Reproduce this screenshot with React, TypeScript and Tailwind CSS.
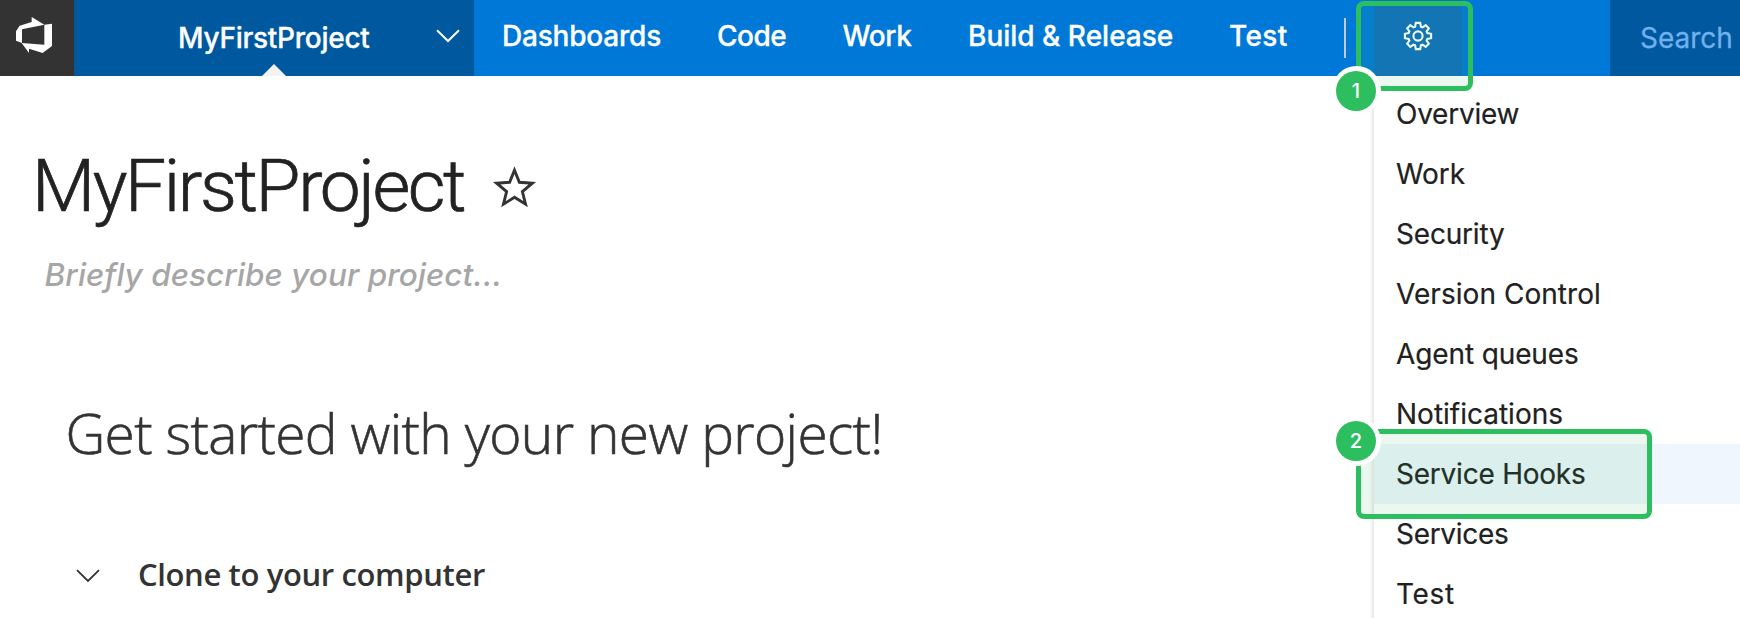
const gearPath = (() => {
  const pts: string[] = [];
  for (let i = 0; i < 8; i++) {
    const a = (i * Math.PI) / 4;
    const at = (x: number, y: number) =>
      `${(x * Math.cos(a) - y * Math.sin(a)).toFixed(2)} ${(x * Math.sin(a) + y * Math.cos(a)).toFixed(2)}`;
    pts.push(`${i === 0 ? "M" : "L"}${at(-2.9, -9.3)}`, `L${at(-2.2, -13.1)}`, `L${at(2.2, -13.1)}`, `L${at(2.9, -9.3)}`);
  }
  return pts.join(" ") + "Z";
})();

const starPoints = Array.from({ length: 10 }, (_, i) => {
  const r = i % 2 === 0 ? 18.8 : 8.3;
  const a = -Math.PI / 2 + (i * Math.PI) / 5;
  return `${(r * Math.cos(a)).toFixed(2)},${(r * Math.sin(a)).toFixed(2)}`;
}).join(" ");

const navItems = [
  { label: "Dashboards", cls: "w-[215px] tracking-[-0.2px]" },
  { label: "Code", cls: "w-[125.5px] tracking-[-0.5px]" },
  { label: "Work", cls: "w-[125.5px] tracking-[-0.4px]" },
  { label: "Build & Release", cls: "w-[261px]" },
  { label: "Test", cls: "w-[114.5px] tracking-[0.4px]" },
];

const menuItems = [
  { label: "Overview", cls: "tracking-[-0.25px]" },
  { label: "Work", cls: "tracking-[-0.1px]" },
  { label: "Security", cls: "tracking-[-0.19px]" },
  { label: "Version Control", cls: "tracking-[0.05px]" },
  { label: "Agent queues", cls: "tracking-[-0.12px]" },
  { label: "Notifications", cls: "tracking-[0px]" },
  { label: "Service Hooks", cls: "bg-[#eff6fd] tracking-[-0.23px]" },
  { label: "Services", cls: "tracking-[-0.3px]" },
  { label: "Test", cls: "tracking-[0.7px]" },
];

function Chevron({ className }: { className: string }) {
  return (
    <svg className={className} width="24" height="14" viewBox="0 0 24 14" fill="none" stroke="currentColor">
      <path d="M1 1.2 12 12 23 1.2" />
    </svg>
  );
}

function Header() {
  return (
    <header className="flex h-[76px] shrink-0 bg-[#0078d7] text-[28px] font-medium text-white">
      <div className="flex w-[74px] bg-[#333333]">
        <svg className="mt-[10px] ml-[10px]" width="50" height="50" viewBox="0 0 150 150" fill="#fff">
          <path d="M65 21 103 44 36 58V99L18 92V64L29 47 65 36Z" />
          <path d="M103 44 126 41V108L98 129 57 116V129L35 99 103 104Z" />
        </svg>
      </div>
      <div className="relative flex w-[400px] items-center bg-[#00589e] pr-[14px] pl-[104px]">
        <span className="tracking-[-0.27px] [-webkit-text-stroke:0.3px_#fff]">MyFirstProject</span>
        <Chevron className="mb-[4px] ml-auto stroke-2" />
        <svg className="absolute bottom-0 left-[188px]" width="24" height="12" viewBox="0 0 24 12" fill="#f3f3f3">
          <path d="M0 12 12 0 24 12Z" />
        </svg>
      </div>
      <nav className="flex h-[71px] items-center pl-[28px] [-webkit-text-stroke:0.3px_#fff]">
        {navItems.map((n) => (
          <span key={n.label} className={`whitespace-nowrap ${n.cls}`}>
            {n.label}
          </span>
        ))}
      </nav>
      <div className="mt-[18px] h-[40px] w-[2px] shrink-0 bg-[#c8c8c8]" />
      <div className="ml-auto flex w-[88px] bg-[#106ebe]">
        <svg className="mt-[21px] ml-[28.5px]" width="30" height="30" viewBox="-15 -15 30 30" fill="none" stroke="#fff" strokeWidth="2.1">
          <path d={gearPath} />
          <circle r="4.6" />
        </svg>
      </div>
      <div className="ml-[148px] flex w-[130px] items-center bg-[#00589e] pl-[30px] font-normal text-[#6fb1ec] [-webkit-text-stroke:0.3px_#6fb1ec]">
        Search
      </div>
    </header>
  );
}

function Callout({ label, className, badge }: { label: string; className: string; badge: string }) {
  return (
    <div className={`absolute rounded-[8px] border-5 border-[#2dbe60] bg-[#2dbe60]/10 ${className}`}>
      <span className={`absolute flex size-[49px] items-center justify-center rounded-full bg-white ${badge}`}>
        <span className="flex size-[39.5px] items-center justify-center rounded-full bg-[#2dbe60] text-[20px] font-medium text-white">
          {label}
        </span>
      </span>
    </div>
  );
}

export default function App() {
  return (
    <div className="relative flex h-[618px] w-[1740px] flex-col overflow-hidden bg-white font-['Inter',sans-serif]">
      <Header />
      <main className="flex flex-col pt-[74px] whitespace-nowrap text-[#333333]">
        <div className="flex h-[72px] items-center pl-[32px]">
          <h1 className="w-[460px] shrink-0 font-['Roboto',sans-serif] text-[73px] leading-[72px] font-light tracking-[-2.4px] text-[#222222] [-webkit-text-stroke:0.7px_#222]">
            MyFirstProject
          </h1>
          <svg className="mt-[6px]" width="45" height="46" viewBox="-22.5 -23 45 46" fill="none" stroke="#333" strokeWidth="2.9">
            <polygon points={starPoints} />
          </svg>
        </div>
        <p className="mt-[33px] flex h-[40px] items-center pl-[44.5px] text-[31.5px] font-medium tracking-[0.05px] text-[#a6a6a6] italic">
          Briefly describe your project...
        </p>
        <h2 className="mt-[108px] flex h-[60px] items-center pl-[65.5px] font-['Open_Sans',sans-serif] text-[55px] font-light tracking-[-0.65px] [-webkit-text-stroke:0.6px_#333]">
          Get started with your new project!
        </h2>
        <div className="mt-[91px] flex h-[40px] items-center pl-[76px]">
          <Chevron className="mt-[4px] mr-[38px] stroke-[1.8]" />
          <h3 className="font-['Open_Sans',sans-serif] text-[31px] font-semibold tracking-[-0.37px]">
            Clone to your computer
          </h3>
        </div>
      </main>
      <ul className="absolute top-[76px] right-0 flex h-[560px] w-[366px] flex-col bg-white pt-[8px] text-[28px] text-[#212121] shadow-[0_4px_6px_rgba(0,0,0,0.2)] [-webkit-text-stroke:0.2px_#212121]">
        {menuItems.map((m) => (
          <li key={m.label} className={`flex h-[60px] shrink-0 items-center pl-[22px] ${m.cls}`}>
            {m.label}
          </li>
        ))}
      </ul>
      <Callout label="1" className="top-[1px] left-[1356px] h-[90px] w-[117px]" badge="top-[60.3px] left-[-29.5px]" />
      <Callout label="2" className="top-[429px] left-[1356px] h-[90px] w-[296px]" badge="top-[-17.3px] left-[-29.5px]" />
    </div>
  );
}
